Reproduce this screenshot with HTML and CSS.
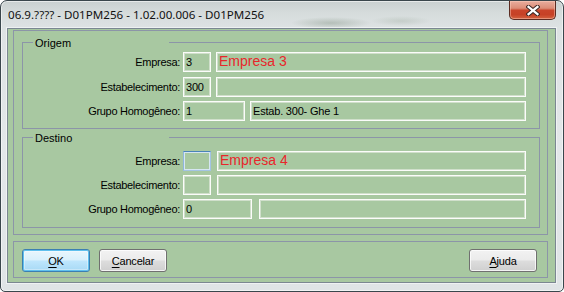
FILE: index.html
```html
<!DOCTYPE html>
<html lang="pt-BR">
<head>
<meta charset="utf-8">
<title>D01PM256</title>
<link rel="stylesheet" href="styles.css">
</head>
<body>
<div class="window">
  <div class="titlebar">
    <span class="title">06.9.???? - D01PM256 - 1.02.00.006 - D01PM256</span>
    <button class="close" aria-label="Fechar">
      <svg width="14" height="11" viewBox="0 0 14 11">
        <path d="M2.5 1.8 L11.5 9.2 M11.5 1.8 L2.5 9.2" stroke="#3b2724" stroke-width="4.2" stroke-linecap="square" fill="none"/>
        <path d="M2.5 1.8 L11.5 9.2 M11.5 1.8 L2.5 9.2" stroke="#ffffff" stroke-width="2.2" stroke-linecap="square" fill="none"/>
      </svg>
    </button>
  </div>
  <div class="client">
    <div class="panel">
      <fieldset class="group group-origem">
        <legend>Origem</legend>
        <div class="row">
          <span class="lbl">Empresa:</span>
          <div class="field code code-s">3</div>
          <div class="field desc big">Empresa 3</div>
        </div>
        <div class="row">
          <span class="lbl">Estabelecimento:</span>
          <div class="field code code-s">300</div>
          <div class="field desc"></div>
        </div>
        <div class="row">
          <span class="lbl">Grupo Homogêneo:</span>
          <div class="field code code-m">1</div>
          <div class="field desc">Estab. 300- Ghe 1</div>
        </div>
      </fieldset>
      <fieldset class="group group-destino">
        <legend>Destino</legend>
        <div class="row">
          <span class="lbl">Empresa:</span>
          <div class="field code code-s focus"></div>
          <div class="field desc big">Empresa 4</div>
        </div>
        <div class="row">
          <span class="lbl">Estabelecimento:</span>
          <div class="field code code-s"></div>
          <div class="field desc"></div>
        </div>
        <div class="row">
          <span class="lbl">Grupo Homogêneo:</span>
          <div class="field code code-l">0</div>
          <div class="field desc"></div>
        </div>
      </fieldset>
    </div>
    <div class="buttons">
      <button class="btn btn-default"><u>O</u>K</button>
      <button class="btn"><u>C</u>ancelar</button>
      <button class="btn btn-help"><u>A</u>juda</button>
    </div>
  </div>
</div>
</body>
</html>
```
FILE: styles.css
```css
* { box-sizing: border-box; }
html, body { margin: 0; padding: 0; }
body {
  background: #ffffff;
  width: 564px;
  height: 292px;
  overflow: hidden;
  font-family: "Liberation Sans", Arial, sans-serif;
  font-size: 11px;
  color: #000;
}
.window {
  width: 564px;
  height: 292px;
  border: 1px solid #3a464c;
  border-radius: 7px 7px 5px 5px;
  background:
    radial-gradient(ellipse 40px 6px at 330px 22px, rgba(110,130,110,.35), rgba(110,130,110,0)),
    radial-gradient(ellipse 30px 5px at 400px 20px, rgba(150,165,150,.3), rgba(150,165,150,0)),
    linear-gradient(to bottom, #c9d0d0 0px, #d6dcdc 12px, #dde2e3 27px, #e3e7e9 50%, #dfe4e6 100%);
  box-shadow: inset 0 0 0 1px rgba(255,255,255,.55);
  display: flex;
  flex-direction: column;
}
.titlebar {
  height: 27px;
  display: flex;
  align-items: flex-start;
  flex: none;
}
.title {
  font-family: "Noto Sans", "Open Sans", sans-serif;
  font-size: 11.6px;
  line-height: 15px;
  padding: 6px 0 0 7px;
  color: #111;
  white-space: nowrap;
}
.close {
  margin: 0 7px 0 auto;
  width: 47px;
  height: 19px;
  padding: 0;
  border: 1px solid #5b2c22;
  border-top: none;
  border-radius: 0 0 5px 5px;
  background: linear-gradient(to bottom, #e9ad9e 0%, #dc8d77 40%, #c9442a 52%, #c64126 75%, #d3623f 100%);
  box-shadow: inset 0 0 0 1px rgba(255,210,195,.45);
  display: flex;
  align-items: center;
  justify-content: center;
}
.close svg { display: block; margin-top: 1px; }
.client {
  margin: 0 7px 0 6px;
  height: 255px;
  flex: none;
  background: #a8c8a1;
  border: 1px solid #7b8792;
  box-shadow: 0 0 0 1px rgba(255,255,255,.5);
}
.panel {
  margin: 1px 0 0 5px;
  width: 535px;
  border: 1px solid #8c95a8;
  padding: 0 7px 6px 8px;
}
.group {
  border: 1px solid #8c95a8;
  margin: 0;
  min-width: 0;
  padding: 0 13px 7px 0;
}
.group legend {
  margin-left: 10px;
  width: 136px;
  padding: 3px 0 0 2px;
  line-height: 13px;
  font-size: 11px;
}
.group-origem { margin-top: 3px; padding-top: 2px; padding-bottom: 7px; }
.group-origem .row + .row { margin-top: 4.5px; }
.group-destino { padding-top: 6px; padding-bottom: 8px; }
.group-destino .row + .row { margin-top: 4px; }
.row {
  display: flex;
  align-items: center;
  height: 20px;
}
.lbl {
  width: 160px;
  flex: none;
  text-align: right;
  padding-right: 3px;
  white-space: nowrap;
  letter-spacing: -0.3px;
}
.field {
  height: 20px;
  flex: none;
  border: 1px solid #fbfcfa;
  box-shadow: inset 0 0 0 1px #d0dfcb;
  padding: 0 2px;
  display: flex;
  align-items: center;
  white-space: nowrap;
  overflow: hidden;
  letter-spacing: -0.2px;
}
.code { margin-right: 5px; }
.code-s { width: 28px; }
.code-m { width: 62px; }
.code-l { width: 69px; }
.group-destino .code { margin-right: 6px; }
.group-destino .code-l { margin-right: 7px; }
.desc { flex: 1; }
.big {
  color: #e8262b;
  font-size: 14px;
  letter-spacing: 0;
  padding-bottom: 2px;
}
.focus {
  border-color: #4a83b8 #a3c4e3 #a3c4e3 #8fb6dc;
  box-shadow: inset 0 0 0 1px #d6e6f2;
}
.buttons {
  margin: 6px 0 0 5px;
  width: 535px;
  height: 37px;
  border: 1px solid #8c95a8;
  display: flex;
  align-items: flex-start;
  padding: 7px 10px 0 8px;
}
.btn {
  width: 68px;
  height: 23px;
  padding: 0;
  font-family: "Liberation Sans", Arial, sans-serif;
  font-size: 11px;
  letter-spacing: -0.2px;
  color: #000;
  border: 1px solid #707070;
  border-radius: 3px;
  background: linear-gradient(to bottom, #f2f2f2 0%, #ebebeb 48%, #dddddd 52%, #cfcfcf 100%);
  box-shadow: inset 0 0 0 1px rgba(255,255,255,.75);
}
.btn + .btn { margin-left: 9px; }
.btn-help { margin-left: auto; }
.btn + .btn-help { margin-left: auto; }
.btn-default {
  border-color: #3c7fb1;
  background: linear-gradient(to bottom, #eaf6fd 0%, #d9f0fc 48%, #bee6fd 52%, #a7d9f5 100%);
  box-shadow: inset 0 0 0 1px #5fc0ee, inset 0 0 0 2px rgba(255,255,255,.35);
}
.btn u { text-decoration: underline; text-underline-offset: 2px; }
```
